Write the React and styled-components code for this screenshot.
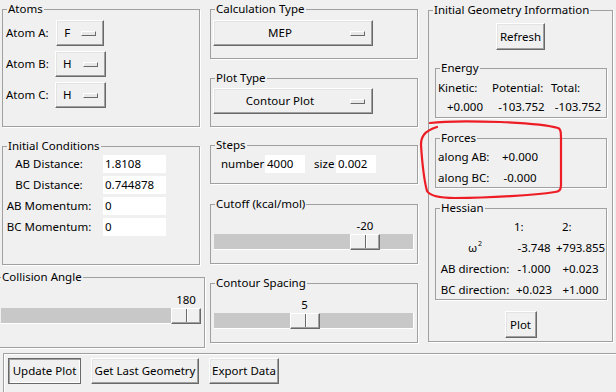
import React from 'react';
import styled, { createGlobalStyle } from 'styled-components';

const Global = createGlobalStyle`
  html, body { margin: 0; padding: 0; background: #f0f0f0; }
  body {
    font-family: "Noto Sans", "Segoe UI", sans-serif;
    font-size: 11.5px;
    color: #000;
  }
  * { box-sizing: border-box; }
`;

const Window = styled.div`
  position: relative;
  width: 616px;
  height: 392px;
  overflow: hidden;
  background: #f0f0f0;
  display: flex;
  flex-direction: column;
`;

const Main = styled.div`
  display: flex;
  height: 353px;
`;

const Column = styled.div`
  display: flex;
  flex-direction: column;
  width: ${(p) => p.$w}px;
  margin-left: ${(p) => p.$ml || 0}px;
`;

const Frame = styled.fieldset`
  margin: ${(p) => p.$mt || 0}px 0 0 ${(p) => p.$ml || 0}px;
  width: ${(p) => p.$w}px;
  height: ${(p) => p.$h}px;
  padding: 0;
  border: 1px solid #a0a0a0;
  box-shadow: 1px 1px 0 #fff;
  min-width: 0;
  flex: none;
`;

const Legend = styled.legend`
  margin-left: 4px;
  padding: 0 1px;
  height: 16px;
  line-height: 16px;
  font-size: 11.5px;
`;

const Label = styled.span`
  line-height: 16px;
  white-space: nowrap;
  text-align: ${(p) => p.$align || 'left'};
  justify-self: ${(p) => p.$justify || 'stretch'};
  padding-left: ${(p) => p.$pl || 0}px;
  width: ${(p) => (p.$w ? `${p.$w}px` : 'auto')};
  margin-left: ${(p) => p.$ml || 0}px;
  flex: none;
`;

/* ---------- Atoms ---------- */
const AtomGrid = styled.div`
  display: grid;
  grid-template-columns: 49px auto;
  grid-auto-rows: 26px;
  row-gap: 5px;
  align-items: center;
  justify-items: center;
  padding: 3px 0 0 3px;
  width: max-content;
`;

const MenuButton = styled.div`
  display: flex;
  align-items: center;
  height: 26px;
  width: ${(p) => (p.$w ? `${p.$w}px` : 'auto')};
  padding: 0 7px;
  background: #f0f0f0;
  border: 1px solid;
  border-color: #fff #696969 #696969 #fff;
  box-shadow: inset -1px -1px 0 #a0a0a0, inset 1px 1px 0 #e3e3e3;
  line-height: 16px;
`;

const MenuText = styled.span`
  flex: ${(p) => (p.$fill ? 1 : 'none')};
  text-align: center;
`;

const Indicator = styled.span`
  flex: none;
  width: 15px;
  height: 5px;
  margin-left: 11px;
  background: #e8e8e8;
  border: 1px solid;
  border-color: #fff #696969 #696969 #fff;
`;

/* ---------- Entries ---------- */
const ICGrid = styled.div`
  display: grid;
  grid-template-columns: 88px 63px;
  grid-auto-rows: 18px;
  column-gap: 10px;
  row-gap: 3px;
  align-items: center;
  padding: 1px 0 0 2px;
`;

const Entry = styled.div`
  width: ${(p) => p.$w}px;
  height: 18px;
  background: #fff;
  padding-left: 2px;
  line-height: 18px;
  flex: none;
  white-space: nowrap;
  overflow: hidden;
`;

const Inner = styled.div`
  padding: ${(p) => p.$pad || '0'};
  display: flex;
  flex-direction: ${(p) => p.$dir || 'column'};
  align-items: ${(p) => p.$align || 'stretch'};
`;

/* ---------- Scale ---------- */
const ScaleBox = styled.div`
  width: 200px;
  display: flex;
  flex-direction: column;
`;

const ValueRow = styled.div`
  position: relative;
  height: 16px;
  line-height: 16px;
`;

const ValueText = styled.span`
  position: absolute;
  top: 0;
  transform: translateX(-50%);
  white-space: nowrap;
`;

const Trough = styled.div`
  position: relative;
  height: 16px;
  background: #c8c8c8;
  border-bottom: 1px solid #fff;
  border-right: 1px solid #fff;
`;

const Thumb = styled.div`
  position: absolute;
  top: 0;
  width: 30px;
  height: 16px;
  background: #f0f0f0;
  border: 1px solid;
  border-color: #fff #696969 #696969 #fff;
  box-shadow: inset -1px -1px 0 #a0a0a0;
  &::after {
    content: '';
    position: absolute;
    left: 14px;
    top: 0;
    bottom: 1px;
    width: 1px;
    background: #696969;
    box-shadow: 1px 0 0 #fff;
  }
`;

function Scale({ value, min, max }) {
  const f = (value - min) / (max - min);
  const left = f * (200 - 30);
  return (
    <ScaleBox>
      <ValueRow>
        <ValueText style={{ left: left + 15 }}>{value}</ValueText>
      </ValueRow>
      <Trough>
        <Thumb style={{ left }} />
      </Trough>
    </ScaleBox>
  );
}

/* ---------- Buttons ---------- */
const Button = styled.div`
  width: ${(p) => p.$w}px;
  height: ${(p) => p.$h || 26}px;
  display: flex;
  align-items: center;
  justify-content: center;
  flex: none;
  background: #f0f0f0;
  border: 1px solid;
  border-color: ${(p) => (p.$sunken ? '#696969' : '#fff #696969 #696969 #fff')};
  box-shadow: ${(p) =>
    p.$sunken
      ? 'inset 1px 1px 0 #a0a0a0, inset -1px -1px 0 #fff'
      : 'inset -1px -1px 0 #a0a0a0, inset 1px 1px 0 #e3e3e3'};
  white-space: nowrap;
  line-height: 16px;
`;

/* ---------- Right info grids ---------- */
const InfoGrid = styled.div`
  display: grid;
  grid-template-columns: ${(p) => p.$cols};
  grid-auto-rows: ${(p) => p.$row}px;
  row-gap: ${(p) => p.$gap || 0}px;
  align-items: center;
  padding: ${(p) => p.$pad || '0 0 0 2px'};
`;

const Sup = styled.sup`
  font-size: 7px;
  vertical-align: top;
  line-height: 8px;
  margin-left: 1px;
`;

/* ---------- Bottom ---------- */
const BottomBar = styled.div`
  flex: 1;
  margin-left: 3px;
  border-top: 1px solid #a0a0a0;
  border-left: 1px solid #a0a0a0;
  box-shadow: inset 1px 1px 0 #fff;
  display: flex;
  align-items: flex-start;
  gap: 10px;
  padding: 4px 0 0 4px;
`;

const Annotation = styled.svg`
  position: absolute;
  left: 0;
  top: 0;
  pointer-events: none;
`;

export default function App() {
  return (
    <Window>
      <Global />
      <Main>
        <Column $w={205}>
          <Frame $mt={1} $ml={2} $w={198} $h={126}>
            <Legend>Atoms</Legend>
            <AtomGrid>
              <Label $justify="start">Atom A:</Label>
              <MenuButton>
                <MenuText>F</MenuText>
                <Indicator />
              </MenuButton>
              <Label $justify="start">Atom B:</Label>
              <MenuButton>
                <MenuText>H</MenuText>
                <Indicator />
              </MenuButton>
              <Label $justify="start">Atom C:</Label>
              <MenuButton>
                <MenuText>H</MenuText>
                <Indicator />
              </MenuButton>
            </AtomGrid>
          </Frame>
          <Frame $mt={11} $ml={2} $w={198} $h={127}>
            <Legend>Initial Conditions</Legend>
            <ICGrid>
              <Label $align="center">AB Distance:</Label>
              <Entry $w={63}>1.8108</Entry>
              <Label $align="center">BC Distance:</Label>
              <Entry $w={63}>0.744878</Entry>
              <Label $align="center">AB Momentum:</Label>
              <Entry $w={63}>0</Entry>
              <Label $align="center">BC Momentum:</Label>
              <Entry $w={63}>0</Entry>
            </ICGrid>
          </Frame>
          <Frame $mt={4} $ml={-4} $w={209} $h={79}>
            <Legend>Collision Angle</Legend>
            <Inner $pad="7px 3px 0 4px">
              <Scale value={180} min={0} max={180} />
            </Inner>
          </Frame>
        </Column>

        <Column $w={208} $ml={5}>
          <Frame $mt={1} $w={208} $h={58}>
            <Legend>Calculation Type</Legend>
            <Inner $pad="3px 0 0 2px" $align="flex-start">
              <MenuButton $w={160}>
                <MenuText $fill>MEP</MenuText>
                <Indicator />
              </MenuButton>
            </Inner>
          </Frame>
          <Frame $mt={11} $w={208} $h={57}>
            <Legend>Plot Type</Legend>
            <Inner $pad="2px 0 0 2px" $align="flex-start">
              <MenuButton $w={160}>
                <MenuText $fill>Contour Plot</MenuText>
                <Indicator />
              </MenuButton>
            </Inner>
          </Frame>
          <Frame $mt={10} $w={208} $h={47}>
            <Legend>Steps</Legend>
            <Inner $pad="2px 0 0 10px" $dir="row" $align="center">
              <Label $w={44}>number</Label>
              <Entry $w={40}>4000</Entry>
              <Label $w={22} $ml={9}>size</Label>
              <Entry $w={40}>0.002</Entry>
            </Inner>
          </Frame>
          <Frame $mt={12} $w={208} $h={68}>
            <Legend>Cutoff (kcal/mol)</Legend>
            <Inner $pad="6px 3px 0 3px">
              <Scale value={-20} min={-100} max={0} />
            </Inner>
          </Frame>
          <Frame $mt={11} $w={208} $h={68}>
            <Legend>Contour Spacing</Legend>
            <Inner $pad="6px 3px 0 3px">
              <Scale value={5} min={1} max={10} />
            </Inner>
          </Frame>
        </Column>

        <Column $w={185} $ml={10}>
          <Frame $mt={2} $w={185} $h={340}>
            <Legend>Initial Geometry Information</Legend>
            <Inner $pad="5px 0 0 0" $align="center">
              <Button $w={49} $h={27}>Refresh</Button>
            </Inner>
            <Frame $mt={10} $ml={6} $w={172} $h={58}>
              <Legend>Energy</Legend>
              <InfoGrid $cols="54px 59px 54px" $row={16} $gap={3} $pad="4px 0 0 2px">
                <Label>Kinetic:</Label>
                <Label>Potential:</Label>
                <Label>Total:</Label>
                <Label $align="center">+0.000</Label>
                <Label $align="center">-103.752</Label>
                <Label $align="center">-103.752</Label>
              </InfoGrid>
            </Frame>
            <Frame $mt={12} $ml={6} $w={172} $h={58}>
              <Legend>Forces</Legend>
              <InfoGrid $cols="60px 44px" $row={21}>
                <Label>along AB:</Label>
                <Label $align="center">+0.000</Label>
                <Label>along BC:</Label>
                <Label $align="center">-0.000</Label>
              </InfoGrid>
            </Frame>
            <Frame $mt={12} $ml={6} $w={172} $h={100}>
              <Legend>Hessian</Legend>
              <InfoGrid $cols="74px 44px 49px" $row={21}>
                <span />
                <Label $pl={2}>1:</Label>
                <Label $pl={6}>2:</Label>
                <Label $align="center">
                  ω<Sup>2</Sup>
                </Label>
                <Label $align="center">-3.748</Label>
                <Label $align="center">+793.855</Label>
                <Label $align="center">AB direction:</Label>
                <Label $align="center">-1.000</Label>
                <Label $align="center">+0.023</Label>
                <Label $align="center">BC direction:</Label>
                <Label $align="center">+0.023</Label>
                <Label $align="center">+1.000</Label>
              </InfoGrid>
            </Frame>
            <Inner $pad="11px 0 0 0" $align="center">
              <Button $w={32} $h={27}>Plot</Button>
            </Inner>
          </Frame>
        </Column>
      </Main>

      <BottomBar>
        <Button $w={73} $sunken>Update Plot</Button>
        <Button $w={108}>Get Last Geometry</Button>
        <Button $w={70}>Export Data</Button>
      </BottomBar>

      <Annotation width="616" height="392" viewBox="0 0 616 392">
        <path
          d="M430,123 C445,121 470,121 500,122 C525,123 548,125 558,128 C561,129 561,133 561,140 L561,185 C561,190 559,192 555,192 C535,195 490,198 455,198 C440,198 430,196 427,191 C424,180 422,160 421,145 C421,137 424,131 437,127"
          fill="none"
          stroke="#ee1c24"
          strokeWidth="2.2"
          strokeLinecap="round"
        />
      </Annotation>
    </Window>
  );
}
